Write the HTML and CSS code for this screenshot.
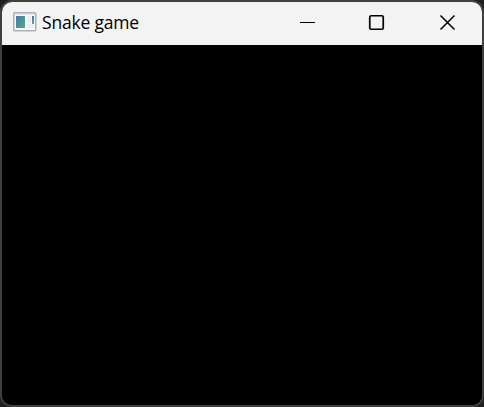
FILE: index.html
```html
<!DOCTYPE html>
<html lang="en">
<head>
<meta charset="utf-8">
<title>Snake game</title>
<link rel="stylesheet" href="styles.css">
</head>
<body>
<div class="window">
  <header class="titlebar">
    <svg class="app-icon" width="24" height="20" viewBox="0 0 24 20">
      <defs>
        <linearGradient id="pane" x1="0" y1="0" x2="1" y2="1">
          <stop offset="0" stop-color="#4679a8"/>
          <stop offset="1" stop-color="#54ad7c"/>
        </linearGradient>
        <linearGradient id="strip" x1="0" y1="0" x2="0" y2="1">
          <stop offset="0" stop-color="#4672b4"/>
          <stop offset="1" stop-color="#58a98c"/>
        </linearGradient>
      </defs>
      <rect x=".75" y=".75" width="22" height="18" rx="1" fill="#f8f9fa" stroke="#acb1b8" stroke-width="1.5"/>
      <path d="M1.5 2h20.5" stroke="#c6cbd3"/>
      <rect x="3" y="4" width="9" height="12" fill="url(#pane)"/>
      <rect x="14" y="4" width="4" height="7" fill="#ebedef"/>
      <rect x="14" y="12" width="7" height="4" fill="#ebedef"/>
      <rect x="19" y="4" width="2" height="8" fill="url(#strip)"/>
    </svg>
    <h1 class="title">Snake game</h1>
    <div class="controls">
      <svg class="control" viewBox="0 0 70 43"><path d="M33 20.5h15"/></svg>
      <svg class="control" viewBox="0 0 70 43"><rect x="32.75" y="13.75" width="13.5" height="13.5" rx="1.5" stroke-width="1.7"/></svg>
      <svg class="control" viewBox="0 0 70 43"><path d="M33.5 13.5l14 14M47.5 13.5l-14 14" stroke-width="1.5"/></svg>
    </div>
  </header>
  <main class="board"></main>
</div>
</body>
</html>
```

FILE: styles.css
```css
* {
  box-sizing: border-box;
}

body {
  margin: 0;
  height: 407px;
  overflow: hidden;
  background: #202020;
}

.window {
  display: flex;
  flex-direction: column;
  height: 407px;
  border: 2px solid #404040;
  border-radius: 12px;
  background: #000;
  overflow: hidden;
}

.titlebar {
  display: flex;
  align-items: center;
  flex: 0 0 43px;
  padding: 0 5px 0 11px;
  background: #f3f3f3;
}

.app-icon {
  flex: none;
  margin-bottom: 3px;
}

.title {
  margin: 0 0 4px 5px;
  font: 400 17.5px/24px "Open Sans", "Noto Sans", sans-serif;
  letter-spacing: -0.2px;
  color: #000;
  white-space: nowrap;
}

.controls {
  display: flex;
  margin-left: auto;
}

.control {
  width: 70px;
  height: 43px;
  fill: none;
  stroke: #000;
}

.board {
  flex: 1;
  background: #000;
}
```
